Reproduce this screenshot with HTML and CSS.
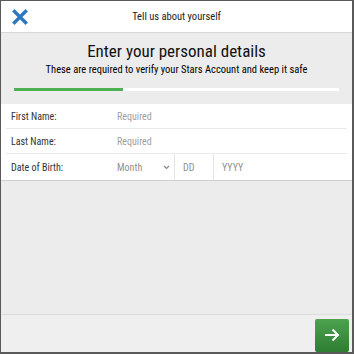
FILE: index.html
```html
<!DOCTYPE html>
<html lang="en">

<head>
    <meta charset="UTF-8">
    <meta name="viewport" content="width=device-width, initial-scale=1.0">
    <title>Tell us about yourself</title>
    <link rel="stylesheet" href="styles.css">
</head>

<body>
    <div class="modal">
        <div class="header">
            <span class="close-btn">
                <svg width="16" height="16" viewBox="0 0 16 16">
                    <path d="M2.5 2.5 L13.5 13.5 M13.5 2.5 L2.5 13.5" stroke="#2f76c3" stroke-width="3.4" stroke-linecap="square" />
                </svg>
            </span>
            <span class="header-title">Tell us about yourself</span>
        </div>
        <div class="content">
            <div class="intro">
                <div class="heading">Enter your personal details</div>
                <div class="subheading">These are required to verify your Stars Account and keep it safe</div>
            </div>
            <div class="progress">
                <div class="progress-fill" style="width: 33.5%"></div>
            </div>
            <div class="form">
                <div class="row">
                    <span class="label">First Name:</span>
                    <span class="field placeholder">Required</span>
                </div>
                <div class="row">
                    <span class="label">Last Name:</span>
                    <span class="field placeholder">Required</span>
                </div>
                <div class="row row-dob">
                    <span class="label">Date of Birth:</span>
                    <div class="dob">
                        <span class="dob-month">Month
                            <svg width="7" height="5" viewBox="0 0 7 5">
                                <path d="M1 1 L3.5 3.5 L6 1" fill="none" stroke="#888" stroke-width="1.1" />
                            </svg>
                        </span>
                        <span class="dob-day">DD</span>
                        <span class="dob-year">YYYY</span>
                    </div>
                </div>
            </div>
        </div>
        <div class="footer">
            <button class="next-btn">
                <svg width="16" height="14" viewBox="0 0 16 14">
                    <path d="M1 7 H14 M8.5 1.5 L14 7 L8.5 12.5" fill="none" stroke="#fff" stroke-width="2" />
                </svg>
            </button>
        </div>
    </div>
</body>

</html>
```

FILE: styles.css
```css
* {
    margin: 0;
    padding: 0;
    box-sizing: border-box;
    font-family: 'Roboto Condensed', 'Liberation Sans Narrow', 'DejaVu Sans Condensed', Roboto, sans-serif;
    font-stretch: condensed;
}

body {
    background: #5a5a5a;
    width: 354px;
    height: 354px;
    padding: 1px 2px 2px 1px;
    overflow: hidden;
}

.modal {
    display: flex;
    flex-direction: column;
    width: 351px;
    height: 351px;
    background: #ececec;
}

.header {
    position: relative;
    display: flex;
    justify-content: center;
    align-items: center;
    height: 32px;
    background: #ffffff;
    border-bottom: 1px solid #d8d8d8;
}

.close-btn {
    position: absolute;
    left: 11px;
    top: 8px;
    display: flex;
}

.header-title {
    font-size: 10.5px;
    color: #222;
}

.content {
    flex: 1;
    display: flex;
    flex-direction: column;
}

.intro {
    text-align: center;
    padding-top: 8px;
    color: #111;
}

.heading {
    font-size: 17px;
    line-height: 20px;
}

.subheading {
    font-size: 10.5px;
    line-height: 14px;
    color: #000;
    margin-top: 2px;
}

.progress {
    margin: 11px 13px 0 13px;
    height: 3px;
    background: #ffffff;
}

.progress-fill {
    height: 100%;
    background: #4cb151;
}

.form {
    margin-top: 13px;
    background: #ffffff;
    border-bottom: 1px solid #cfcfcf;
    padding: 0 5px;
}

.row {
    display: flex;
    align-items: center;
    height: 25px;
    border-bottom: 1px solid #ebebeb;
    font-size: 10px;
}

.row-dob {
    height: 26px;
    border-bottom: none;
}

.label {
    width: 111px;
    padding-left: 5px;
    color: #333;
}

.placeholder {
    color: #a0a0a0;
}

.dob {
    display: flex;
    align-self: stretch;
    color: #909090;
}

.dob span {
    display: flex;
    align-items: center;
}

.dob-month {
    width: 58px;
    justify-content: space-between;
    padding-right: 4px;
    border-right: 1px solid #e6e6e6;
}

.dob-day {
    width: 39px;
    padding-left: 8px;
    border-right: 1px solid #e6e6e6;
}

.dob-year {
    padding-left: 8px;
}

.footer {
    display: flex;
    justify-content: flex-end;
    align-items: center;
    height: 38px;
    background: #efefef;
    border-top: 1px solid #dcdcdc;
    padding-right: 3px;
}

.next-btn {
    display: flex;
    justify-content: center;
    align-items: center;
    width: 34px;
    height: 33px;
    border: none;
    border-radius: 2px;
    background: linear-gradient(#4ca34f, #2e7d32);
    margin-top: 3px;
}
```
